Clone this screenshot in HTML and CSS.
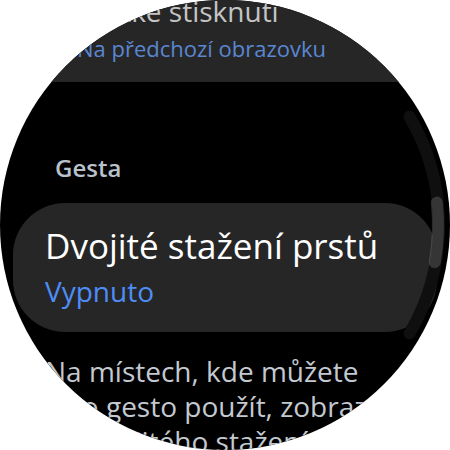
FILE: index.html
```html
<!DOCTYPE html>
<html lang="cs">
<head>
    <meta charset="utf-8">
    <meta content="initial-scale=1, width=device-width" name="viewport">
    <title>Gesta</title>
    <link rel="stylesheet" href="styles.css">
</head>

<body>
    <div class="watch">
        <div class="screen">
            <div class="chip chip--edge">
                <span class="chip-label">Krátké stisknutí</span>
                <span class="chip-value">Na předchozí obrazovku</span>
            </div>
            <h2 class="section">Gesta</h2>
            <div class="chip">
                <span class="chip-label">Dvojité stažení prstů</span>
                <span class="chip-value">Vypnuto</span>
            </div>
            <p class="note">Na místech, kde můžete<br>toto gesto použít, zobrazí se<br>tip dvojitého stažení prstů.</p>
        </div>
        <svg class="scrollbar" width="450" height="450" viewBox="0 0 450 450">
            <path class="scrollbar-track" d="M409.6 116.7 A214 214 0 0 1 409.6 333.3"/>
            <path class="scrollbar-thumb" d="M436.8 202.6 A213 213 0 0 1 434.8 262.2"/>
        </svg>
    </div>
</body>
</html>
```

FILE: styles.css
```css
:root {
    box-sizing: border-box;
}
:root * {
    box-sizing: inherit;
}
body {
    background-color: #FFF;
    font-family: "Open Sans", Roboto, sans-serif;
    margin: 0;
}
.watch {
    background-color: #000;
    border-radius: 50%;
    height: 450px;
    overflow: hidden;
    position: relative;
    width: 450px;
}
.screen {
    display: flex;
    flex-direction: column;
    padding: 0 13px;
}
.chip {
    background-color: #262626;
    border-radius: 52px;
    display: flex;
    flex-direction: column;
    gap: 7px;
    padding: 22px 32px 24px;
}
.chip-label {
    color: #FFF;
    font-size: 35px;
    line-height: 42px;
    white-space: nowrap;
}
.chip-value {
    color: #4E8DF6;
    font-size: 28px;
    line-height: 34px;
    white-space: nowrap;
}
/* item near the top edge is drawn smaller and dimmer */
.chip--edge {
    border-radius: 40px;
    gap: 6px;
    margin-top: -28px;
    padding: 22px 64px 20px;
}
.chip--edge .chip-label {
    color: #C4C4C4;
    font-size: 28px;
    line-height: 34px;
}
.chip--edge .chip-value {
    color: #5A86D2;
    font-size: 22px;
    line-height: 28px;
}
.section {
    color: #B9C1CA;
    font-size: 24px;
    font-weight: 600;
    line-height: 30px;
    margin: 71px 0 20px;
    padding-left: 42px;
}
.note {
    color: #C3C9D1;
    font-size: 28px;
    line-height: 35px;
    margin: 22px 0 0;
    padding-left: 32px;
    white-space: nowrap;
}
.scrollbar {
    left: 0;
    pointer-events: none;
    position: absolute;
    top: 0;
}
.scrollbar path {
    fill: none;
    stroke-linecap: round;
}
.scrollbar-track {
    stroke: #0F0F0F;
    stroke-width: 12;
}
.scrollbar-thumb {
    stroke: rgba(255, 255, 255, 0.16);
    stroke-width: 12;
}
```
